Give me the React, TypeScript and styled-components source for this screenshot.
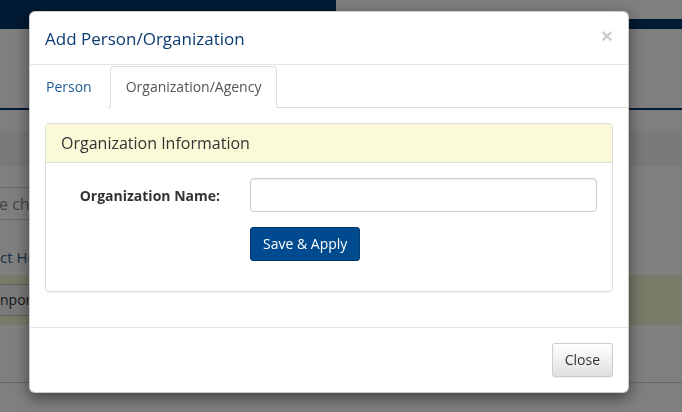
import React, { useState } from 'react';
import styled, { createGlobalStyle } from 'styled-components';

const GlobalStyle = createGlobalStyle`
  * { box-sizing: border-box; }
  html, body {
    margin: 0;
    padding: 0;
    width: 682px;
    height: 412px;
    overflow: hidden;
    background: #fff;
    font-family: "Open Sans", "Liberation Sans", Arial, sans-serif;
    font-size: 14px;
    color: #333;
  }
`;

/* ---------- page behind the modal ---------- */

const Page = styled.div`
  width: 682px;
  height: 412px;
  display: flex;
  flex-direction: column;
`;

const TopBar = styled.div`
  display: flex;
  height: 29px;
`;

const Brand = styled.div`
  width: 336px;
  background: #033466;
`;

const TopRight = styled.div`
  flex: 1;
  display: flex;
  flex-direction: column;
  justify-content: flex-end;
`;

const NavStrip = styled.div`
  height: 10px;
  background: #033466;
`;

const PageHeader = styled.div`
  height: 81px;
  border-bottom: 2px solid #033466;
`;

const Band = styled.div<{ $tone: string; $height: number; $gap: number }>`
  height: ${p => p.$height}px;
  margin-top: ${p => p.$gap}px;
  background: ${p => p.$tone};
  display: flex;
  align-items: center;
`;

const SearchBox = styled.div`
  width: 400px;
  height: 33px;
  margin-top: 21px;
  border-top: 1px solid #d6d6d6;
  border-bottom: 1px solid #d6d6d6;
  display: flex;
  align-items: center;
  color: #8a8a8a;
  font-size: 16px;
  margin-left: -1px;
`;

const PageLink = styled.div`
  margin-top: 27px;
  height: 20px;
  color: #2a5f96;
  font-size: 15px;
  line-height: 20px;
`;

const GhostButton = styled.div`
  height: 32px;
  width: 60px;
  margin-left: -10px;
  border: 1px solid #bbb;
  border-radius: 3px;
  background: #f4f4f4;
  font-size: 14px;
  line-height: 30px;
  padding-left: 9px;
  color: #333;
`;

const PageRule = styled.div`
  margin-top: 57px;
  border-top: 1px solid #cfcfcf;
`;

/* ---------- modal ---------- */

const Backdrop = styled.div`
  position: fixed;
  inset: 0;
  background: rgba(0, 0, 0, 0.5);
`;

const Dialog = styled.div`
  position: fixed;
  top: 11px;
  left: 29px;
  width: 600px;
  background: #fff;
  border: 1px solid rgba(0, 0, 0, 0.2);
  border-radius: 6px;
  box-shadow: 0 5px 15px rgba(0, 0, 0, 0.5);
  display: flex;
  flex-direction: column;
`;

const Header = styled.div`
  height: 53px;
  padding: 0 15px;
  border-bottom: 1px solid #e5e5e5;
  display: flex;
  align-items: center;
  justify-content: space-between;
`;

const Title = styled.h4`
  margin: 0;
  font-size: 17px;
  font-weight: 400;
  color: #0b3c72;
`;

const CloseX = styled.button`
  border: 0;
  background: transparent;
  padding: 0;
  margin-top: -6px;
  font-family: "Liberation Sans", Arial, sans-serif;
  font-size: 21px;
  font-weight: 700;
  line-height: 1;
  color: #000;
  opacity: 0.2;
  cursor: pointer;
`;

const Tabs = styled.ul`
  list-style: none;
  margin: 0;
  padding: 1px 0 0 0;
  display: flex;
  border-bottom: 1px solid #ddd;
`;

const Tab = styled.li<{ $active?: boolean }>`
  margin-right: 2px;
  margin-bottom: -1px;
  padding: 10px 15px;
  line-height: 20px;
  font-size: 14px;
  border: 1px solid ${p => (p.$active ? '#ddd' : 'transparent')};
  border-bottom-color: ${p => (p.$active ? '#fff' : 'transparent')};
  border-radius: 4px 4px 0 0;
  background: #fff;
  color: ${p => (p.$active ? '#555' : '#1d5b98')};
  cursor: pointer;
`;

const Body = styled.div`
  padding: 15px;
`;

const Panel = styled.div`
  border: 1px solid #ddd;
  border-radius: 4px;
  margin-bottom: 20px;
  box-shadow: 0 1px 1px rgba(0, 0, 0, 0.05);
`;

const PanelHeading = styled.div`
  height: 39px;
  padding: 0 15px;
  background: #fafad8;
  border-bottom: 1px solid #ddd;
  border-radius: 3px 3px 0 0;
  display: flex;
  align-items: center;
  font-size: 16px;
  color: #333;
`;

const PanelBody = styled.div`
  padding: 15px 15px 30px 0;
  display: grid;
  grid-template-columns: 189px 1fr;
  row-gap: 15px;
`;

const Label = styled.label`
  padding: 2px 15px 0 0;
  text-align: right;
  font-weight: 700;
  font-size: 14px;
  line-height: 32px;
  color: #333;
`;

const Field = styled.div`
  padding-left: 15px;
`;

const TextInput = styled.input`
  display: block;
  width: 100%;
  height: 34px;
  padding: 6px 12px;
  font-family: inherit;
  font-size: 14px;
  border: 1px solid #ccc;
  border-radius: 4px;
  box-shadow: inset 0 1px 1px rgba(0, 0, 0, 0.075);
  outline: none;
`;

const Button = styled.button<{ $primary?: boolean }>`
  height: 34px;
  padding: 6px 12px;
  font-family: inherit;
  font-size: 14px;
  line-height: 20px;
  border-radius: 3px;
  cursor: pointer;
  border: 1px solid ${p => (p.$primary ? '#003a70' : '#ccc')};
  color: ${p => (p.$primary ? '#fff' : '#333')};
  background: ${p => (p.$primary ? '#004b8f' : 'linear-gradient(#fff, #e0e0e0)')};
  box-shadow: ${p => (p.$primary ? 'none' : 'inset 0 1px 0 rgba(255,255,255,.15), 0 1px 1px rgba(0,0,0,.075)')};
`;

const Footer = styled.div`
  padding: 15px;
  border-top: 1px solid #e5e5e5;
  display: flex;
  justify-content: flex-end;
`;

const App: React.FC = () => {
  const [tab, setTab] = useState<'person' | 'org'>('org');
  const [orgName, setOrgName] = useState('');

  return (
    <>
      <GlobalStyle />
      <Page>
        <TopBar>
          <Brand />
          <TopRight>
            <NavStrip />
          </TopRight>
        </TopBar>
        <PageHeader />
        <Band $tone="#f2f2f2" $height={35} $gap={21} />
        <SearchBox>e changes</SearchBox>
        <PageLink>ct Heads</PageLink>
        <Band $tone="#f5f5d2" $height={50} $gap={8}>
          <GhostButton>nport</GhostButton>
        </Band>
        <PageRule />
      </Page>

      <Backdrop />
      <Dialog>
        <Header>
          <Title>Add Person/Organization</Title>
          <CloseX aria-label="Close">×</CloseX>
        </Header>
        <Tabs>
          <Tab $active={tab === 'person'} onClick={() => setTab('person')}>Person</Tab>
          <Tab $active={tab === 'org'} onClick={() => setTab('org')}>Organization/Agency</Tab>
        </Tabs>
        <Body>
          <Panel>
            <PanelHeading>Organization Information</PanelHeading>
            <PanelBody>
              <Label htmlFor="orgName">Organization Name:</Label>
              <Field>
                <TextInput id="orgName" value={orgName} onChange={e => setOrgName(e.target.value)} />
              </Field>
              <div />
              <Field>
                <Button $primary>Save &amp; Apply</Button>
              </Field>
            </PanelBody>
          </Panel>
        </Body>
        <Footer>
          <Button>Close</Button>
        </Footer>
      </Dialog>
    </>
  );
};

export default App;
